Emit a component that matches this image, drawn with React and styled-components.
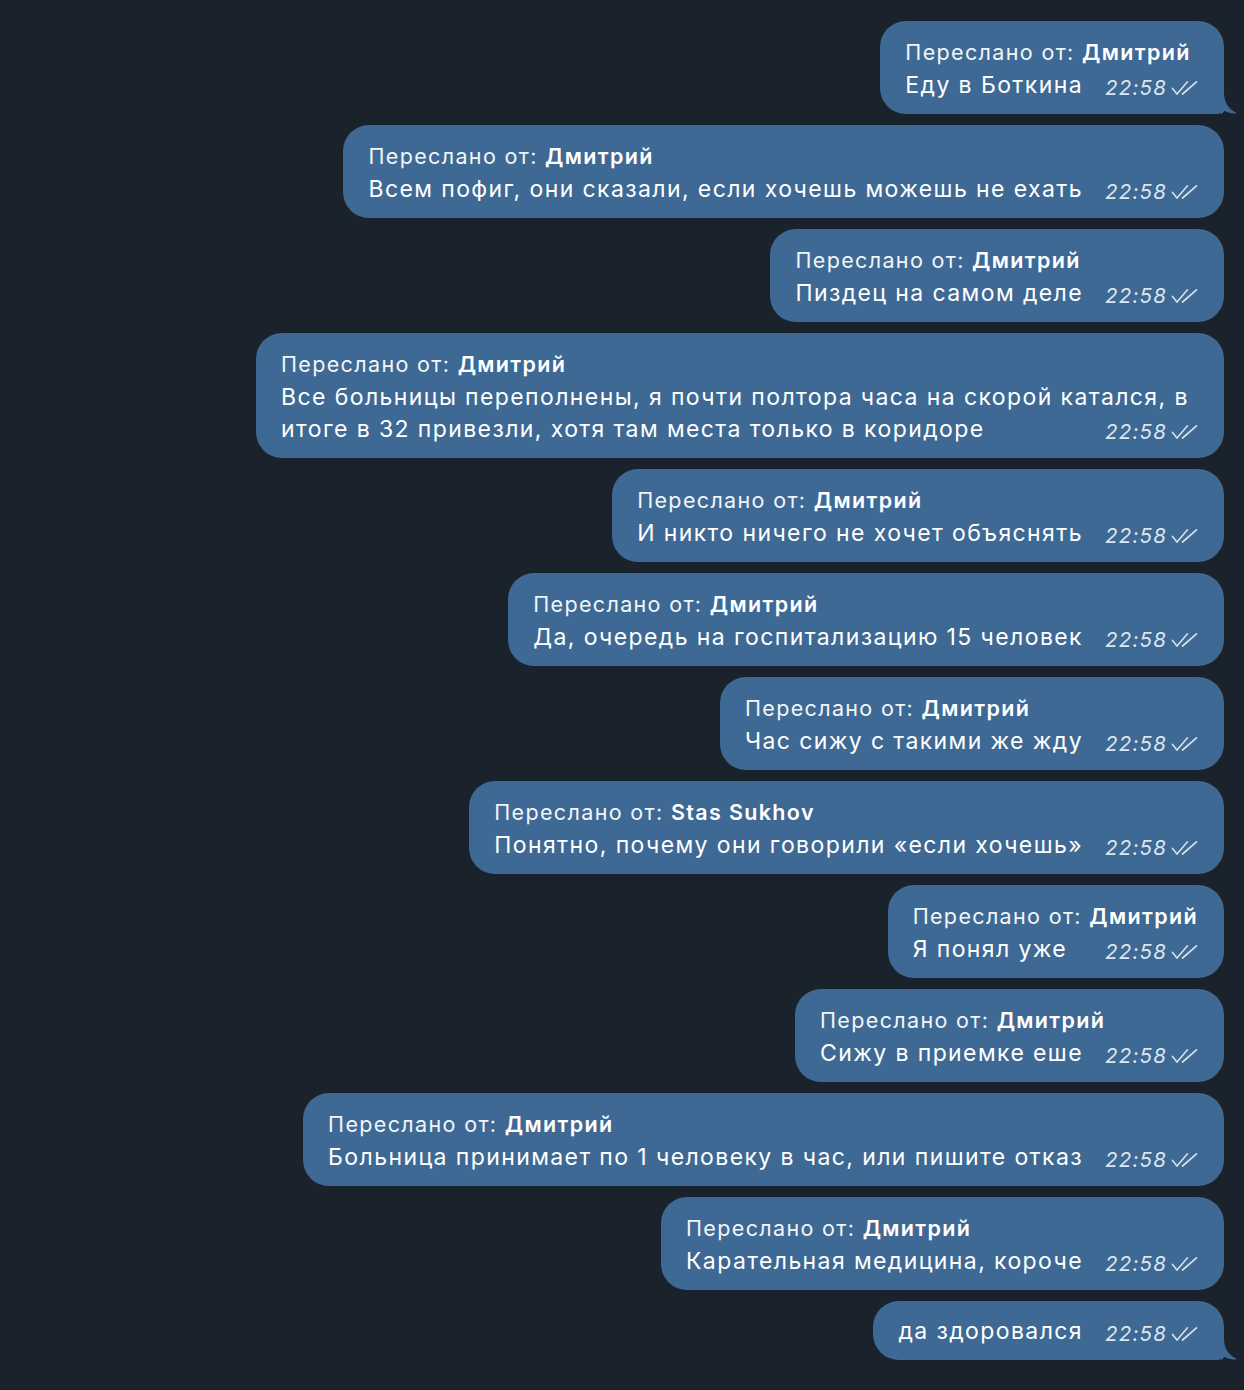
import React from "react";
import styled, { createGlobalStyle } from "styled-components";

const messages = [
    { from: "Дмитрий", text: "Еду в Боткина", tail: true },
    { from: "Дмитрий", text: "Всем пофиг, они сказали, если хочешь можешь не ехать" },
    { from: "Дмитрий", text: "Пиздец на самом деле" },
    {
        from: "Дмитрий",
        text: "Все больницы переполнены, я почти полтора часа на скорой катался, в итоге в 32 привезли, хотя там места только в коридоре",
    },
    { from: "Дмитрий", text: "И никто ничего не хочет объяснять" },
    { from: "Дмитрий", text: "Да, очередь на госпитализацию 15 человек" },
    { from: "Дмитрий", text: "Час сижу с такими же жду" },
    { from: "Stas Sukhov", text: "Понятно, почему они говорили «если хочешь»" },
    { from: "Дмитрий", text: "Я понял уже" },
    { from: "Дмитрий", text: "Сижу в приемке еше" },
    { from: "Дмитрий", text: "Больница принимает по 1 человеку в час, или пишите отказ" },
    { from: "Дмитрий", text: "Карательная медицина, короче" },
    { text: "да здоровался", tail: true },
];

const Checks = () => (
    <svg width="27" height="16" viewBox="0 0 27 16" fill="none">
        <path
            d="M1.5 8.5 L6 14 L16.5 1.8 M11.5 14 L25.5 1.8"
            stroke="#d3dee9"
            strokeWidth="1.7"
            strokeLinecap="round"
            strokeLinejoin="round"
        />
    </svg>
);

const TailShape = () => (
    <svg width="16" height="22" viewBox="0 0 16 22">
        <path d="M0 0 H3 C3 10 7 17 15 20.5 C15.6 20.8 15.3 21.6 14.5 21.6 C10 21.8 7 20.6 3.5 18.8 C2 20.8 1 22 0 22 Z" fill="#3e6994" />
    </svg>
);

const App = () => {
    return (
        <>
            <GlobalStyle />
            <Chat>
                {messages.map((m, i) => (
                    <Bubble key={i} $tail={m.tail}>
                        {m.from && (
                            <Forward>
                                Переслано от: <b>{m.from}</b>
                            </Forward>
                        )}
                        <Text>
                            {m.text}
                            <Meta>
                                <Time>22:58</Time>
                                <Checks />
                            </Meta>
                        </Text>
                        {m.tail && (
                            <Tail>
                                <TailShape />
                            </Tail>
                        )}
                    </Bubble>
                ))}
            </Chat>
        </>
    );
};

const GlobalStyle = createGlobalStyle`
    html, body {
        margin: 0;
        padding: 0;
        background: #1a222c;
    }
    body {
        font-family: Inter, "Noto Sans", sans-serif;
        -webkit-font-smoothing: antialiased;
    }
`;

const Chat = styled.div`
    display: flex;
    flex-direction: column;
    align-items: flex-end;
    gap: 11px;
    padding: 21px 20px 30px;
    min-height: 100vh;
    box-sizing: border-box;
    background: #1a222c;
`;

const Bubble = styled.div`
    position: relative;
    box-sizing: border-box;
    max-width: 968px;
    padding: 14px 26px 13px 25px;
    background: #3e6994;
    border-radius: 26px;
    border-bottom-right-radius: ${(p) => (p.$tail ? "6px" : "26px")};
    color: #ffffff;
`;

const Forward = styled.div`
    font-size: 21.5px;
    line-height: 34px;
    letter-spacing: 1.35px;
    color: #f2f5f8;
    white-space: nowrap;

    b {
        font-weight: 600;
        color: #ffffff;
    }
`;

const Text = styled.div`
    font-size: 23px;
    line-height: 32px;
    letter-spacing: 1.4px;
`;

const Meta = styled.span`
    float: right;
    display: inline-flex;
    align-items: center;
    gap: 4px;
    margin-left: 22px;
    margin-top: 7px;
    line-height: 24px;
`;

const Time = styled.span`
    font-size: 20.5px;
    font-style: italic;
    color: #dde6ef;
    letter-spacing: 1.2px;
`;

const Tail = styled.span`
    position: absolute;
    right: -13px;
    bottom: 0;
    display: block;
    line-height: 0;
`;

export default App;
